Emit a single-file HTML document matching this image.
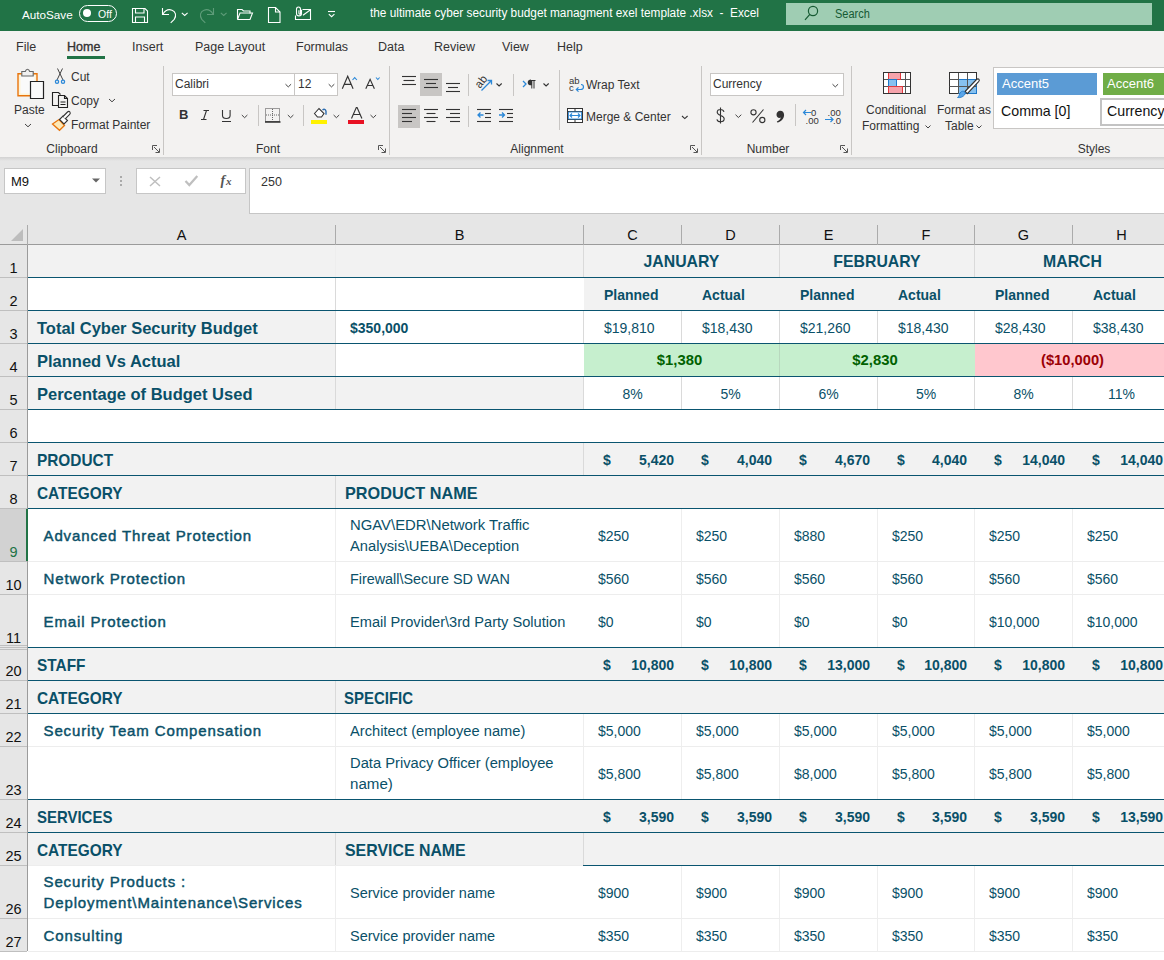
<!DOCTYPE html><html><head><meta charset="utf-8"><style>
html,body{margin:0;padding:0;}
body{width:1164px;height:960px;overflow:hidden;position:relative;background:#fff;font-family:"Liberation Sans",sans-serif;}
div{box-sizing:border-box;}
.rb{color:#333333;font-size:12.5px;line-height:15px;}
.c{color:#0B5675;}
</style></head><body>

<div style="position:absolute;left:0px;top:0px;width:1164px;height:31px;background:#217346"></div>
<div style="position:absolute;left:22px;top:7px;white-space:nowrap;color:#fff;font-size:11.7px;line-height:15px">AutoSave</div>
<div style="position:absolute;left:79px;top:5px;width:38px;height:17px;border:1.3px solid #fff;border-radius:9px"></div>
<div style="position:absolute;left:82.5px;top:8.5px;width:8.5px;height:8.5px;background:#fff;border-radius:50%"></div>
<div style="position:absolute;left:98px;top:7.5px;white-space:nowrap;color:#fff;font-size:10.5px;line-height:13px">Off</div>
<svg style="position:absolute;left:0;top:0" width="360" height="31" viewBox="0 0 360 31">
<g fill="none" stroke="#fff" stroke-width="1.1">
<path d="M132.5 8.5h12.5l2.5 2.5v11.5h-15z"/><path d="M135.5 8.5v4.5h8.5v-4.5"/><path d="M135.5 22.5v-5.5h9v5.5"/>
<path d="M162.5 8v6.5h6.5"/><path d="M163 14c2.2-3.5 5.8-5 9-3.8 3.6 1.4 4.8 5.6 2.2 9.2l-3.5 3.5"/>
<path d="M181.8 12.8l2.9 2.6 2.9-2.6"/>
</g>
<g fill="none" stroke="#5E9C79" stroke-width="1.1">
<path d="M213.5 8v6.5h-6.5"/><path d="M213 14c-2.2-3.5-5.8-5-9-3.8-3.6 1.4-4.8 5.6-2.2 9.2l3.5 3.5"/>
<path d="M220.8 12.8l2.9 2.6 2.9-2.6"/>
</g>
<g fill="none" stroke="#fff" stroke-width="1.1">
<path d="M237.5 19.5v-10h4.5l1.5 1.5h6.5v2.5"/><path d="M237.5 19.5h12.5l2.5-6.5h-12.5l-2.5 6.5"/>
<path d="M268.5 7.5h7l4.5 4.5v10.5h-11.5z"/><path d="M275.5 7.5v4.5h4.5"/>
<path d="M302.5 9.5h8v10h-15v-4"/><path d="M303 15.2l7.2-5.2"/>
<path d="M301.5 9.8v3.7c0 1.4-1.1 2.4-2.5 2.4s-2.5-1-2.5-2.4v-4.3c0-1.3 0.9-2.2 2-2.2s2 0.9 2 2.2v4c0 0.5-0.3 0.9-0.8 0.9s-0.8-0.4-0.8-0.9v-3"/>
<path d="M328 11.5h7"/><path d="M328.8 14.2l2.8 2.5 2.8-2.5"/>
</g>
</svg>
<div style="position:absolute;left:370px;top:6px;white-space:nowrap;color:#fff;font-size:12px;line-height:15px;transform:scaleX(0.985);transform-origin:0 0">the ultimate cyber security budget managment exel template .xlsx&nbsp; -&nbsp; Excel</div>
<div style="position:absolute;left:786px;top:3px;width:366px;height:22px;background:#9FCDB3"></div>
<svg style="position:absolute;left:800px;top:4px" width="22" height="20" viewBox="0 0 22 20"><g fill="none" stroke="#165A33" stroke-width="1.2"><circle cx="13" cy="7" r="4.6"/><path d="M9.8 10.3l-4.8 5.5"/></g></svg>
<div style="position:absolute;left:835px;top:7px;white-space:nowrap;color:#165A33;font-size:12.5px;line-height:15px;transform:scaleX(0.88);transform-origin:0 0">Search</div>
<div style="position:absolute;left:0px;top:31px;width:1164px;height:126px;background:#F3F2F1"></div>
<div style="position:absolute;left:0px;top:157px;width:1164px;height:4px;background:linear-gradient(#D2D2D2,#E6E6E6)"></div>
<div style="position:absolute;left:16px;top:40px;white-space:nowrap;color:#333333;font-size:12.5px;line-height:15px">File</div>
<div style="position:absolute;left:67px;top:40px;white-space:nowrap;color:#333333;font-size:12.5px;line-height:15px;-webkit-text-stroke:0.35px #333333">Home</div>
<div style="position:absolute;left:132px;top:40px;white-space:nowrap;color:#333333;font-size:12.5px;line-height:15px">Insert</div>
<div style="position:absolute;left:195px;top:40px;white-space:nowrap;color:#333333;font-size:12.5px;line-height:15px">Page Layout</div>
<div style="position:absolute;left:296px;top:40px;white-space:nowrap;color:#333333;font-size:12.5px;line-height:15px">Formulas</div>
<div style="position:absolute;left:378px;top:40px;white-space:nowrap;color:#333333;font-size:12.5px;line-height:15px">Data</div>
<div style="position:absolute;left:434px;top:40px;white-space:nowrap;color:#333333;font-size:12.5px;line-height:15px">Review</div>
<div style="position:absolute;left:502px;top:40px;white-space:nowrap;color:#333333;font-size:12.5px;line-height:15px">View</div>
<div style="position:absolute;left:557px;top:40px;white-space:nowrap;color:#333333;font-size:12.5px;line-height:15px">Help</div>
<div style="position:absolute;left:67px;top:56px;width:38px;height:3px;background:#217346"></div>
<div style="position:absolute;left:163px;top:66px;width:1px;height:89px;background:#C8C6C4"></div>
<div style="position:absolute;left:389px;top:66px;width:1px;height:89px;background:#C8C6C4"></div>
<div style="position:absolute;left:701px;top:66px;width:1px;height:89px;background:#C8C6C4"></div>
<div style="position:absolute;left:851px;top:66px;width:1px;height:89px;background:#C8C6C4"></div>
<div style="position:absolute;left:468px;top:74px;width:1px;height:22px;background:#C8C6C4"></div>
<div style="position:absolute;left:513px;top:74px;width:1px;height:22px;background:#C8C6C4"></div>
<div style="position:absolute;left:559px;top:70px;width:1px;height:60px;background:#C8C6C4"></div>
<div style="position:absolute;left:468px;top:106px;width:1px;height:21px;background:#C8C6C4"></div>
<div style="position:absolute;left:258px;top:105px;width:1px;height:21px;background:#C8C6C4"></div>
<div style="position:absolute;left:303px;top:105px;width:1px;height:21px;background:#C8C6C4"></div>
<div style="position:absolute;left:795px;top:104px;width:1px;height:22px;background:#C8C6C4"></div>
<div class="rb" style="position:absolute;left:12px;top:142px;width:120px;text-align:center;font-size:12px">Clipboard</div>
<div class="rb" style="position:absolute;left:208px;top:142px;width:120px;text-align:center;font-size:12px">Font</div>
<div class="rb" style="position:absolute;left:477px;top:142px;width:120px;text-align:center;font-size:12px">Alignment</div>
<div class="rb" style="position:absolute;left:708px;top:142px;width:120px;text-align:center;font-size:12px">Number</div>
<div class="rb" style="position:absolute;left:1034px;top:142px;width:120px;text-align:center;font-size:12px">Styles</div>
<svg style="position:absolute;left:151px;top:144px" width="10" height="10" viewBox="0 0 10 10"><g fill="none" stroke="#555" stroke-width="1"><path d="M1.5 6V1.5H6"/><path d="M3 3l5 5M8.5 4.5v4h-4"/></g></svg>
<svg style="position:absolute;left:377px;top:144px" width="10" height="10" viewBox="0 0 10 10"><g fill="none" stroke="#555" stroke-width="1"><path d="M1.5 6V1.5H6"/><path d="M3 3l5 5M8.5 4.5v4h-4"/></g></svg>
<svg style="position:absolute;left:689px;top:144px" width="10" height="10" viewBox="0 0 10 10"><g fill="none" stroke="#555" stroke-width="1"><path d="M1.5 6V1.5H6"/><path d="M3 3l5 5M8.5 4.5v4h-4"/></g></svg>
<svg style="position:absolute;left:839px;top:144px" width="10" height="10" viewBox="0 0 10 10"><g fill="none" stroke="#555" stroke-width="1"><path d="M1.5 6V1.5H6"/><path d="M3 3l5 5M8.5 4.5v4h-4"/></g></svg>
<svg style="position:absolute;left:0;top:60px" width="165" height="80" viewBox="0 60 165 80">
<path d="M18 73.8h19v22h-19z" fill="#FDF3D8" stroke="#E8740C" stroke-width="1.4"/>
<path d="M20.5 75.5h14v18h-14z" fill="#FAFAFA"/>
<path d="M21.8 76v-4.5h3.5c0.5-1.5 1.5-2.3 2.2-2.3s1.7 0.8 2.2 2.3h3.5v4.5z" fill="#F0F0F0" stroke="#666" stroke-width="1.1"/>
<path d="M30.5 81.5h13v17h-13z" fill="#FAFAFA" stroke="#222" stroke-width="1.2"/>
<g fill="none" stroke="#444" stroke-width="1"><path d="M57.5 68.5l5.5 11.5M62.5 68.5l-5.5 11.5"/></g>
<g fill="none" stroke="#2B88D8" stroke-width="1.3"><circle cx="57" cy="81.8" r="1.6"/><circle cx="63" cy="81.8" r="1.6"/></g>
<g fill="none" stroke="#222" stroke-width="1.1"><path d="M59 105.5h-6.5v-13h6l2 2"/><path d="M58.5 107.5v-12h6l3 3v9z"/><path d="M64.5 95.5v3h3"/><path d="M60.5 102h5M60.5 104.5h5"/></g>
<path d="M52.5 124l6.5-4.5 5.5 6-5 4.8z" fill="#FDE9B8" stroke="#E8740C" stroke-width="1.3"/>
<path d="M59.5 119.5l3.5-3.5 4.5 4.5-3.5 3.5z" fill="#fff" stroke="#333" stroke-width="1.1"/>
<path d="M63 116.5l4.5-4.5c0.8-0.8 1.8-0.8 2.4 0s0.5 1.6-0.2 2.3l-4.5 4.5" fill="#fff" stroke="#333" stroke-width="1.1"/>
<path d="M25 124l3 2.8 3-2.8" fill="none" stroke="#444" stroke-width="1"/>
<path d="M109 99l3 2.8 3-2.8" fill="none" stroke="#444" stroke-width="1"/>
</svg>
<div style="position:absolute;left:14px;top:102.5px;white-space:nowrap;color:#333333;font-size:12px;line-height:15px">Paste</div>
<div style="position:absolute;left:71px;top:69.5px;white-space:nowrap;color:#333333;font-size:12px;line-height:15px">Cut</div>
<div style="position:absolute;left:71px;top:93.5px;white-space:nowrap;color:#333333;font-size:12px;line-height:15px">Copy</div>
<div style="position:absolute;left:71px;top:117.5px;white-space:nowrap;color:#333333;font-size:12px;line-height:15px">Format Painter</div>
<div style="position:absolute;left:172px;top:73px;width:123px;height:23px;background:#fff;border:1px solid #C8C6C4"></div>
<div style="position:absolute;left:294px;top:73px;width:44px;height:23px;background:#fff;border:1px solid #C8C6C4"></div>
<div style="position:absolute;left:175px;top:77px;white-space:nowrap;color:#333333;font-size:12px;line-height:15px">Calibri</div>
<div style="position:absolute;left:298px;top:77px;white-space:nowrap;color:#333333;font-size:12px;line-height:15px">12</div>
<svg style="position:absolute;left:160px;top:60px" width="230" height="75" viewBox="160 60 230 75">
<g fill="none" stroke="#444" stroke-width="1">
<path d="M285.5 84.2l2.8 2.7 2.8-2.7"/><path d="M328.7 84.2l2.8 2.7 2.8-2.7"/>
<path d="M241.8 115l2.8 2.7 2.8-2.7"/><path d="M287.8 115l2.8 2.7 2.8-2.7"/>
<path d="M333.6 115l2.8 2.7 2.8-2.7"/><path d="M370.5 115l2.8 2.7 2.8-2.7"/>
</g>
<path d="M352.5 80l2.2-2.4 2.2 2.4M376 77.5l1.8 2 1.8-2" fill="none" stroke="#2B88D8" stroke-width="1.1"/>
<g fill="none" stroke="#333" stroke-width="1.15">
<path d="M342.3 88.8l5.4-12.5 5.4 12.5M344.2 84.3h7"/>
<path d="M365.8 88.8l4.3-9.5 4.3 9.5M367.3 85.5h5.6"/>
</g>
<path d="M265.5 108.5h14v13h-14z" fill="none" stroke="#444" stroke-width="1" stroke-dasharray="1 1"/>
<path d="M265 122h15.5" stroke="#111" stroke-width="1.3"/>
<path d="M272.5 109v12M266 115h13" stroke="#666" stroke-width="1" stroke-dasharray="1 1"/>
<rect x="311" y="120" width="16" height="4" fill="#FFF200"/>
<path d="M314.5 113.5l4.5-5 5 5-2.5 3.5h-4z" fill="#fff" stroke="#333" stroke-width="1.1"/>
<path d="M322.5 110c1.5-1.2 3-0.8 3.5 1.2v3.5" fill="none" stroke="#2B6CB0" stroke-width="1.4"/>
<rect x="348" y="120" width="16" height="4" fill="#E81123"/>
<path d="M351.5 118.5l4.8-11h0.8l4.8 11M353.3 114.5h7" fill="none" stroke="#333" stroke-width="1.15"/>
<path d="M222.5 110v5.5c0 2 1.5 3 3.8 3s3.8-1 3.8-3v-5.5" fill="none" stroke="#333" stroke-width="1.1"/>
<path d="M222 121.5h9" stroke="#333" stroke-width="1"/>
<path d="M203.5 110.5h5.5M201 119.5h5.5M206.5 110.5l-3 9" fill="none" stroke="#333" stroke-width="1.1"/>
</svg>
<div style="position:absolute;left:179px;top:106px;white-space:nowrap;color:#333;font-size:13px;line-height:17px"><b>B</b></div>
<div style="position:absolute;left:420px;top:73px;width:22px;height:23px;background:#C8C6C4"></div>
<div style="position:absolute;left:398px;top:105px;width:22px;height:23px;background:#C8C6C4"></div>
<svg style="position:absolute;left:0;top:0" width="720" height="140" viewBox="0 0 720 140"><g fill="none" stroke="#333" stroke-width="1.1"><path d="M402 76.5h14"/><path d="M403.5 80.5h11.0"/><path d="M402 84.5h14"/><path d="M424 79.5h14"/><path d="M426 83.5h10"/><path d="M424 87.5h14"/><path d="M446 83.5h14"/><path d="M448 87.5h10"/><path d="M446 91.5h14"/><path d="M402 109.5h14"/><path d="M424 109.5h14"/><path d="M446 109.5h14"/><path d="M402 113.5h10"/><path d="M426.5 113.5h9.0"/><path d="M450 113.5h10"/><path d="M402 117.5h14"/><path d="M424 117.5h14"/><path d="M446 117.5h14"/><path d="M402 121.5h10"/><path d="M426.5 121.5h9.0"/><path d="M450 121.5h10"/><path d="M477 109.5h14"/><path d="M485 113.5h6"/><path d="M485 117.5h6"/><path d="M477 121.5h14"/><path d="M499 109.5h14"/><path d="M507 113.5h6"/><path d="M507 117.5h6"/><path d="M499 121.5h14"/><path d="M496.5 83.5l2.6 2.5 2.6-2.5"/><path d="M543.5 83.5l2.6 2.5 2.6-2.5"/><path d="M682 116l2.8 2.6 2.8-2.6"/></g><g fill="none" stroke="#2B88D8" stroke-width="1.3"><path d="M478 115h5.5M480.5 112.5l-2.5 2.5 2.5 2.5"/><path d="M499 115h5.5M502 112.5l2.5 2.5-2.5 2.5"/><path d="M481.5 90.5l10-10M487.5 80.5h4v4"/><path d="M523 81l3 3-3 3"/></g><text x="0" y="0" font-size="11.5" fill="#333" font-family="Liberation Sans" transform="translate(480 89) rotate(-52)">ab</text><path d="M531 80h4.5v1h-1v7.5h-1v-7.5h-1.2v7.5h-1v-3.2c-2.2 0-3.6-1-3.6-2.9s1.4-2.9 3.3-2.9z" fill="#333"/><text x="569" y="84" font-size="9.5" fill="#333" font-family="Liberation Sans">ab</text><text x="569" y="91" font-size="9.5" fill="#333" font-family="Liberation Sans">c</text><path d="M576.5 89.5h4c2.2 0 3-1 3-2.5s-0.8-2.5-2.5-2.5M578.5 87.3l-2.2 2.2 2.2 2.2" fill="none" stroke="#2B88D8" stroke-width="1.2"/><rect x="567.5" y="108.5" width="15" height="14" fill="#fff" stroke="#333" stroke-width="1"/><path d="M567.5 111.5h15M567.5 119.5h15M575 108.5v3M575 119.5v3" stroke="#333" stroke-width="1" fill="none"/><path d="M568.5 112h13v7h-13z" fill="#fff" stroke="#2B88D8" stroke-width="0.9"/><path d="M570 115.5h10M572 113.5l-2 2 2 2M578 113.5l2 2-2 2" fill="none" stroke="#2B88D8" stroke-width="1.2"/></svg>
<div style="position:absolute;left:586px;top:77.5px;white-space:nowrap;color:#333333;font-size:12px;line-height:15px">Wrap Text</div>
<div style="position:absolute;left:586px;top:109.5px;white-space:nowrap;color:#333333;font-size:12px;line-height:15px">Merge &amp; Center</div>
<div style="position:absolute;left:710px;top:73px;width:134px;height:23px;background:#fff;border:1px solid #C8C6C4"></div>
<div style="position:absolute;left:713px;top:77px;white-space:nowrap;color:#333333;font-size:12px;line-height:15px">Currency</div>
<svg style="position:absolute;left:0;top:0" width="860" height="140" viewBox="0 0 860 140"><g fill="none" stroke="#444" stroke-width="1"><path d="M832.5 84.2l2.8 2.7 2.8-2.7"/><path d="M735.5 114.7l2.9 2.8 2.9-2.8"/></g><g fill="none" stroke="#333" stroke-width="1.1"><path d="M724 111.8c-0.5-1.5-1.8-2.3-3.5-2.3-2 0-3.3 1.1-3.3 2.8 0 3.8 7 2.7 7 6.5 0 1.8-1.5 3-3.6 3-1.9 0-3.3-0.9-3.7-2.5M720.5 107.5v16"/><circle cx="753.5" cy="112.3" r="2.6"/><circle cx="762.3" cy="120" r="2.6"/><path d="M763.5 109.5l-11 13"/></g><path d="M780.2 110.8c2.3 0 3.9 1.6 3.9 4.1 0 3.5-2.8 6.6-6.8 7.6l-0.5-1c2.2-0.9 3.6-2.3 4-3.9-0.4 0.2-0.8 0.3-1.3 0.3-1.7 0-3-1.2-3-3.2 0-2.2 1.6-3.9 3.7-3.9z" fill="#333"/><text x="811" y="116" font-size="9.5" fill="#333" font-family="Liberation Sans">0</text><text x="805.5" y="123.5" font-size="9.5" fill="#333" font-family="Liberation Sans">.00</text><text x="827.5" y="116" font-size="9.5" fill="#333" font-family="Liberation Sans">.00</text><text x="833" y="123.5" font-size="9.5" fill="#333" font-family="Liberation Sans">.0</text><path d="M803.5 112.5h8M806 110l-2.5 2.5 2.5 2.5M825 119.5h8M830.5 117l2.5 2.5-2.5 2.5" fill="none" stroke="#2B88D8" stroke-width="1.2"/></svg>
<svg style="position:absolute;left:0;top:0" width="1000" height="140" viewBox="0 0 1000 140"><rect x="883.5" y="72.5" width="27" height="21" fill="#fff" stroke="#333"/><path d="M883.5 79.5h27M883.5 86.5h27M905.5 72.5v21" stroke="#555" stroke-width="1" fill="none"/><rect x="888.5" y="72.5" width="12" height="7" fill="#F5A3AB" stroke="#E03A3E"/><rect x="888.5" y="79.5" width="8" height="7" fill="#86C1F0" stroke="#1F78C8"/><rect x="888.5" y="86.5" width="14" height="7" fill="#F5A3AB" stroke="#E03A3E"/><path d="M883.5 72.5h27v21h-27z" stroke="#333" stroke-width="1" fill="none"/><rect x="949.5" y="72.5" width="27" height="21" fill="#fff" stroke="#333"/><rect x="958.5" y="79.5" width="18" height="14" fill="#86C1F0" stroke="#1F78C8"/><path d="M949.5 79.5h9M949.5 86.5h27M958.5 72.5v21M967.5 72.5v21" stroke="#555" stroke-width="1" fill="none"/><path d="M949.5 72.5h27v7" stroke="#333" stroke-width="1" fill="none"/><path d="M965 91.5l11.5-12c0.8-0.8 2-0.8 2.5-0.2s0.3 1.6-0.4 2.4l-11.3 12z" fill="#fff" stroke="#333" stroke-width="1.1"/><path d="M957.5 97.5c2.5 0.5 5.5-0.5 7-2.5 1.2-1.5 0.8-3-0.6-3.6-1.5-0.6-3 0.2-3.8 1.6-0.8 1.5-1.2 3.5-2.6 4.5z" fill="#5AA5E8" stroke="#1F78C8" stroke-width="0.8"/><g fill="none" stroke="#444" stroke-width="1"><path d="M925.5 125.5l2.5 2.5 2.5-2.5"/><path d="M976.5 125.5l2.5 2.5 2.5-2.5"/></g></svg>
<div style="position:absolute;left:866px;top:103px;white-space:nowrap;color:#333333;font-size:12px;line-height:15px">Conditional</div>
<div style="position:absolute;left:862px;top:119px;white-space:nowrap;color:#333333;font-size:12px;line-height:15px">Formatting</div>
<div style="position:absolute;left:937px;top:103px;white-space:nowrap;color:#333333;font-size:12px;line-height:15px">Format as</div>
<div style="position:absolute;left:945px;top:119px;white-space:nowrap;color:#333333;font-size:12px;line-height:15px">Table</div>
<div style="position:absolute;left:993px;top:67px;width:180px;height:62px;background:#fff;border:1px solid #C8C6C4"></div>
<div style="position:absolute;left:997px;top:73px;width:100px;height:22px;background:#5B9BD5"></div>
<div style="position:absolute;left:1103px;top:73px;width:70px;height:22px;background:#70AD47"></div>
<div style="position:absolute;left:1002px;top:76px;white-space:nowrap;color:#fff;font-size:13px;line-height:15px">Accent5</div>
<div style="position:absolute;left:1107px;top:76px;white-space:nowrap;color:#fff;font-size:13px;line-height:15px">Accent6</div>
<div style="position:absolute;left:1001px;top:104px;white-space:nowrap;color:#111;font-size:14.2px;line-height:15px">Comma [0]</div>
<div style="position:absolute;left:1100px;top:98px;width:80px;height:28px;border:2.5px solid #C3C3C3;background:#fff"></div>
<div style="position:absolute;left:1107px;top:104px;white-space:nowrap;color:#111;font-size:14.2px;line-height:15px">Currency</div>
<div style="position:absolute;left:0px;top:161px;width:1164px;height:64px;background:#E6E6E6"></div>
<div style="position:absolute;left:4px;top:168px;width:102px;height:26px;background:#fff;border:1px solid #C6C6C6"></div>
<div style="position:absolute;left:11px;top:174px;white-space:nowrap;color:#111;font-size:13px;line-height:15px">M9</div>
<svg style="position:absolute;left:91px;top:177px" width="10" height="8"><path d="M1 1.5h8l-4 4z" fill="#666"/></svg>
<div style="position:absolute;left:120px;top:176px;width:2px;height:2px;background:#AAAAAA"></div>
<div style="position:absolute;left:120px;top:180px;width:2px;height:2px;background:#AAAAAA"></div>
<div style="position:absolute;left:120px;top:184px;width:2px;height:2px;background:#AAAAAA"></div>
<div style="position:absolute;left:136px;top:168px;width:110px;height:26px;background:#fff;border:1px solid #C6C6C6"></div>
<svg style="position:absolute;left:136px;top:168px" width="110" height="26" viewBox="136 168 110 26"><g fill="none" stroke="#BFBFBF"><path d="M150 177l10 9M160 177l-10 9" stroke-width="1.5"/><path d="M185.5 181l3.8 4 8-9" stroke-width="2.2"/></g>
<text x="220.5" y="185" font-size="14" font-weight="bold" font-style="italic" font-family="Liberation Serif" fill="#555">f</text><text x="226" y="185" font-size="11" font-weight="bold" font-style="italic" font-family="Liberation Serif" fill="#555">x</text></svg>
<div style="position:absolute;left:249px;top:168px;width:920px;height:46px;background:#fff;border:1px solid #C6C6C6;border-right:none"></div>
<div style="position:absolute;left:261px;top:175px;white-space:nowrap;color:#333;font-size:12.5px;line-height:15px">250</div>
<!--GRID-->
<div style="position:absolute;left:0px;top:225px;width:1164px;height:735px;background:#fff"></div>
<div style="position:absolute;left:0px;top:225px;width:1164px;height:20px;background:#E6E6E6"></div>
<div style="position:absolute;left:0px;top:244px;width:1164px;height:1px;background:#9B9B9B"></div>
<svg style="position:absolute;left:10px;top:228px" width="14" height="14"><path d="M13 1v12H1z" fill="#BDBDBD"/></svg>
<div style="position:absolute;left:335px;top:225px;width:1px;height:20px;background:#ABABAB"></div>
<div style="position:absolute;left:583px;top:225px;width:1px;height:20px;background:#ABABAB"></div>
<div style="position:absolute;left:681px;top:225px;width:1px;height:20px;background:#ABABAB"></div>
<div style="position:absolute;left:779px;top:225px;width:1px;height:20px;background:#ABABAB"></div>
<div style="position:absolute;left:877px;top:225px;width:1px;height:20px;background:#ABABAB"></div>
<div style="position:absolute;left:974px;top:225px;width:1px;height:20px;background:#ABABAB"></div>
<div style="position:absolute;left:1072px;top:225px;width:1px;height:20px;background:#ABABAB"></div>
<div style="position:absolute;left:1170px;top:225px;width:1px;height:20px;background:#ABABAB"></div>
<div style="position:absolute;left:27px;top:225px;width:1px;height:20px;background:#ABABAB"></div>
<div style="position:absolute;left:28px;top:227px;width:307px;text-align:center;font-size:14.5px;line-height:16px;color:#111">A</div>
<div style="position:absolute;left:336px;top:227px;width:247px;text-align:center;font-size:14.5px;line-height:16px;color:#111">B</div>
<div style="position:absolute;left:584px;top:227px;width:97px;text-align:center;font-size:14.5px;line-height:16px;color:#111">C</div>
<div style="position:absolute;left:682px;top:227px;width:97px;text-align:center;font-size:14.5px;line-height:16px;color:#111">D</div>
<div style="position:absolute;left:780px;top:227px;width:97px;text-align:center;font-size:14.5px;line-height:16px;color:#111">E</div>
<div style="position:absolute;left:878px;top:227px;width:96px;text-align:center;font-size:14.5px;line-height:16px;color:#111">F</div>
<div style="position:absolute;left:975px;top:227px;width:97px;text-align:center;font-size:14.5px;line-height:16px;color:#111">G</div>
<div style="position:absolute;left:1073px;top:227px;width:97px;text-align:center;font-size:14.5px;line-height:16px;color:#111">H</div>
<div style="position:absolute;left:0px;top:245px;width:27px;height:707px;background:#E6E6E6"></div>
<div style="position:absolute;left:27px;top:245px;width:1px;height:706px;background:#9B9B9B"></div>
<div style="position:absolute;left:0px;top:277px;width:27px;height:1px;background:#BFBFBF"></div>
<div style="position:absolute;left:0px;top:310px;width:27px;height:1px;background:#BFBFBF"></div>
<div style="position:absolute;left:0px;top:343px;width:27px;height:1px;background:#BFBFBF"></div>
<div style="position:absolute;left:0px;top:376px;width:27px;height:1px;background:#BFBFBF"></div>
<div style="position:absolute;left:0px;top:409px;width:27px;height:1px;background:#BFBFBF"></div>
<div style="position:absolute;left:0px;top:442px;width:27px;height:1px;background:#BFBFBF"></div>
<div style="position:absolute;left:0px;top:475px;width:27px;height:1px;background:#BFBFBF"></div>
<div style="position:absolute;left:0px;top:508px;width:27px;height:1px;background:#BFBFBF"></div>
<div style="position:absolute;left:0px;top:561px;width:27px;height:1px;background:#BFBFBF"></div>
<div style="position:absolute;left:0px;top:594px;width:27px;height:1px;background:#BFBFBF"></div>
<div style="position:absolute;left:0px;top:647px;width:27px;height:1px;background:#BFBFBF"></div>
<div style="position:absolute;left:0px;top:680px;width:27px;height:1px;background:#BFBFBF"></div>
<div style="position:absolute;left:0px;top:713px;width:27px;height:1px;background:#BFBFBF"></div>
<div style="position:absolute;left:0px;top:746px;width:27px;height:1px;background:#BFBFBF"></div>
<div style="position:absolute;left:0px;top:799px;width:27px;height:1px;background:#BFBFBF"></div>
<div style="position:absolute;left:0px;top:832px;width:27px;height:1px;background:#BFBFBF"></div>
<div style="position:absolute;left:0px;top:865px;width:27px;height:1px;background:#BFBFBF"></div>
<div style="position:absolute;left:0px;top:918px;width:27px;height:1px;background:#BFBFBF"></div>
<div style="position:absolute;left:0px;top:951px;width:27px;height:1px;background:#BFBFBF"></div>
<div style="position:absolute;left:0px;top:645px;width:27px;height:1px;background:#BFBFBF"></div>
<div style="position:absolute;left:0px;top:649px;width:27px;height:1px;background:#BFBFBF"></div>
<div style="position:absolute;left:0px;top:509px;width:27px;height:52px;background:#D2D2D2"></div>
<div style="position:absolute;left:26px;top:509px;width:2px;height:52px;background:#217346"></div>
<div style="position:absolute;left:0;top:261px;width:27px;text-align:center;font-size:14.5px;line-height:14px;color:#111">1</div>
<div style="position:absolute;left:0;top:294px;width:27px;text-align:center;font-size:14.5px;line-height:14px;color:#111">2</div>
<div style="position:absolute;left:0;top:327px;width:27px;text-align:center;font-size:14.5px;line-height:14px;color:#111">3</div>
<div style="position:absolute;left:0;top:360px;width:27px;text-align:center;font-size:14.5px;line-height:14px;color:#111">4</div>
<div style="position:absolute;left:0;top:393px;width:27px;text-align:center;font-size:14.5px;line-height:14px;color:#111">5</div>
<div style="position:absolute;left:0;top:426px;width:27px;text-align:center;font-size:14.5px;line-height:14px;color:#111">6</div>
<div style="position:absolute;left:0;top:459px;width:27px;text-align:center;font-size:14.5px;line-height:14px;color:#111">7</div>
<div style="position:absolute;left:0;top:492px;width:27px;text-align:center;font-size:14.5px;line-height:14px;color:#111">8</div>
<div style="position:absolute;left:0;top:545px;width:27px;text-align:center;font-size:14.5px;line-height:14px;color:#217346">9</div>
<div style="position:absolute;left:0;top:578px;width:27px;text-align:center;font-size:14.5px;line-height:14px;color:#111">10</div>
<div style="position:absolute;left:0;top:631px;width:27px;text-align:center;font-size:14.5px;line-height:14px;color:#111">11</div>
<div style="position:absolute;left:0;top:664px;width:27px;text-align:center;font-size:14.5px;line-height:14px;color:#111">20</div>
<div style="position:absolute;left:0;top:697px;width:27px;text-align:center;font-size:14.5px;line-height:14px;color:#111">21</div>
<div style="position:absolute;left:0;top:730px;width:27px;text-align:center;font-size:14.5px;line-height:14px;color:#111">22</div>
<div style="position:absolute;left:0;top:783px;width:27px;text-align:center;font-size:14.5px;line-height:14px;color:#111">23</div>
<div style="position:absolute;left:0;top:816px;width:27px;text-align:center;font-size:14.5px;line-height:14px;color:#111">24</div>
<div style="position:absolute;left:0;top:849px;width:27px;text-align:center;font-size:14.5px;line-height:14px;color:#111">25</div>
<div style="position:absolute;left:0;top:902px;width:27px;text-align:center;font-size:14.5px;line-height:14px;color:#111">26</div>
<div style="position:absolute;left:0;top:935px;width:27px;text-align:center;font-size:14.5px;line-height:14px;color:#111">27</div>
<div style="position:absolute;left:28px;top:245px;width:308px;height:32px;background:#F2F2F2"></div>
<div style="position:absolute;left:336px;top:245px;width:248px;height:32px;background:#F2F2F2"></div>
<div style="position:absolute;left:584px;top:245px;width:98px;height:32px;background:#F2F2F2"></div>
<div style="position:absolute;left:682px;top:245px;width:98px;height:32px;background:#F2F2F2"></div>
<div style="position:absolute;left:780px;top:245px;width:98px;height:32px;background:#F2F2F2"></div>
<div style="position:absolute;left:878px;top:245px;width:97px;height:32px;background:#F2F2F2"></div>
<div style="position:absolute;left:975px;top:245px;width:98px;height:32px;background:#F2F2F2"></div>
<div style="position:absolute;left:1073px;top:245px;width:98px;height:32px;background:#F2F2F2"></div>
<div style="position:absolute;left:28px;top:278px;width:308px;height:32px;background:#FFFFFF"></div>
<div style="position:absolute;left:336px;top:278px;width:248px;height:32px;background:#FFFFFF"></div>
<div style="position:absolute;left:584px;top:278px;width:98px;height:32px;background:#F2F2F2"></div>
<div style="position:absolute;left:682px;top:278px;width:98px;height:32px;background:#F2F2F2"></div>
<div style="position:absolute;left:780px;top:278px;width:98px;height:32px;background:#F2F2F2"></div>
<div style="position:absolute;left:878px;top:278px;width:97px;height:32px;background:#F2F2F2"></div>
<div style="position:absolute;left:975px;top:278px;width:98px;height:32px;background:#F2F2F2"></div>
<div style="position:absolute;left:1073px;top:278px;width:98px;height:32px;background:#F2F2F2"></div>
<div style="position:absolute;left:28px;top:311px;width:308px;height:32px;background:#F2F2F2"></div>
<div style="position:absolute;left:336px;top:311px;width:248px;height:32px;background:#FFFFFF"></div>
<div style="position:absolute;left:584px;top:311px;width:98px;height:32px;background:#FFFFFF"></div>
<div style="position:absolute;left:682px;top:311px;width:98px;height:32px;background:#FFFFFF"></div>
<div style="position:absolute;left:780px;top:311px;width:98px;height:32px;background:#FFFFFF"></div>
<div style="position:absolute;left:878px;top:311px;width:97px;height:32px;background:#FFFFFF"></div>
<div style="position:absolute;left:975px;top:311px;width:98px;height:32px;background:#FFFFFF"></div>
<div style="position:absolute;left:1073px;top:311px;width:98px;height:32px;background:#FFFFFF"></div>
<div style="position:absolute;left:28px;top:344px;width:308px;height:32px;background:#F2F2F2"></div>
<div style="position:absolute;left:336px;top:344px;width:248px;height:32px;background:#FFFFFF"></div>
<div style="position:absolute;left:584px;top:344px;width:98px;height:32px;background:#C6EFCE"></div>
<div style="position:absolute;left:682px;top:344px;width:98px;height:32px;background:#C6EFCE"></div>
<div style="position:absolute;left:780px;top:344px;width:98px;height:32px;background:#C6EFCE"></div>
<div style="position:absolute;left:878px;top:344px;width:97px;height:32px;background:#C6EFCE"></div>
<div style="position:absolute;left:975px;top:344px;width:98px;height:32px;background:#FFC7CE"></div>
<div style="position:absolute;left:1073px;top:344px;width:98px;height:32px;background:#FFC7CE"></div>
<div style="position:absolute;left:28px;top:377px;width:308px;height:32px;background:#F2F2F2"></div>
<div style="position:absolute;left:336px;top:377px;width:248px;height:32px;background:#F2F2F2"></div>
<div style="position:absolute;left:584px;top:377px;width:98px;height:32px;background:#FFFFFF"></div>
<div style="position:absolute;left:682px;top:377px;width:98px;height:32px;background:#FFFFFF"></div>
<div style="position:absolute;left:780px;top:377px;width:98px;height:32px;background:#FFFFFF"></div>
<div style="position:absolute;left:878px;top:377px;width:97px;height:32px;background:#FFFFFF"></div>
<div style="position:absolute;left:975px;top:377px;width:98px;height:32px;background:#FFFFFF"></div>
<div style="position:absolute;left:1073px;top:377px;width:98px;height:32px;background:#FFFFFF"></div>
<div style="position:absolute;left:28px;top:410px;width:308px;height:32px;background:#FFFFFF"></div>
<div style="position:absolute;left:336px;top:410px;width:248px;height:32px;background:#FFFFFF"></div>
<div style="position:absolute;left:584px;top:410px;width:98px;height:32px;background:#FFFFFF"></div>
<div style="position:absolute;left:682px;top:410px;width:98px;height:32px;background:#FFFFFF"></div>
<div style="position:absolute;left:780px;top:410px;width:98px;height:32px;background:#FFFFFF"></div>
<div style="position:absolute;left:878px;top:410px;width:97px;height:32px;background:#FFFFFF"></div>
<div style="position:absolute;left:975px;top:410px;width:98px;height:32px;background:#FFFFFF"></div>
<div style="position:absolute;left:1073px;top:410px;width:98px;height:32px;background:#FFFFFF"></div>
<div style="position:absolute;left:28px;top:443px;width:308px;height:32px;background:#F2F2F2"></div>
<div style="position:absolute;left:336px;top:443px;width:248px;height:32px;background:#F2F2F2"></div>
<div style="position:absolute;left:584px;top:443px;width:98px;height:32px;background:#F2F2F2"></div>
<div style="position:absolute;left:682px;top:443px;width:98px;height:32px;background:#F2F2F2"></div>
<div style="position:absolute;left:780px;top:443px;width:98px;height:32px;background:#F2F2F2"></div>
<div style="position:absolute;left:878px;top:443px;width:97px;height:32px;background:#F2F2F2"></div>
<div style="position:absolute;left:975px;top:443px;width:98px;height:32px;background:#F2F2F2"></div>
<div style="position:absolute;left:1073px;top:443px;width:98px;height:32px;background:#F2F2F2"></div>
<div style="position:absolute;left:28px;top:476px;width:308px;height:32px;background:#F2F2F2"></div>
<div style="position:absolute;left:336px;top:476px;width:248px;height:32px;background:#F2F2F2"></div>
<div style="position:absolute;left:584px;top:476px;width:98px;height:32px;background:#F2F2F2"></div>
<div style="position:absolute;left:682px;top:476px;width:98px;height:32px;background:#F2F2F2"></div>
<div style="position:absolute;left:780px;top:476px;width:98px;height:32px;background:#F2F2F2"></div>
<div style="position:absolute;left:878px;top:476px;width:97px;height:32px;background:#F2F2F2"></div>
<div style="position:absolute;left:975px;top:476px;width:98px;height:32px;background:#F2F2F2"></div>
<div style="position:absolute;left:1073px;top:476px;width:98px;height:32px;background:#F2F2F2"></div>
<div style="position:absolute;left:28px;top:509px;width:308px;height:52px;background:#FFFFFF"></div>
<div style="position:absolute;left:336px;top:509px;width:248px;height:52px;background:#FFFFFF"></div>
<div style="position:absolute;left:584px;top:509px;width:98px;height:52px;background:#FFFFFF"></div>
<div style="position:absolute;left:682px;top:509px;width:98px;height:52px;background:#FFFFFF"></div>
<div style="position:absolute;left:780px;top:509px;width:98px;height:52px;background:#FFFFFF"></div>
<div style="position:absolute;left:878px;top:509px;width:97px;height:52px;background:#FFFFFF"></div>
<div style="position:absolute;left:975px;top:509px;width:98px;height:52px;background:#FFFFFF"></div>
<div style="position:absolute;left:1073px;top:509px;width:98px;height:52px;background:#FFFFFF"></div>
<div style="position:absolute;left:28px;top:562px;width:308px;height:32px;background:#FFFFFF"></div>
<div style="position:absolute;left:336px;top:562px;width:248px;height:32px;background:#FFFFFF"></div>
<div style="position:absolute;left:584px;top:562px;width:98px;height:32px;background:#FFFFFF"></div>
<div style="position:absolute;left:682px;top:562px;width:98px;height:32px;background:#FFFFFF"></div>
<div style="position:absolute;left:780px;top:562px;width:98px;height:32px;background:#FFFFFF"></div>
<div style="position:absolute;left:878px;top:562px;width:97px;height:32px;background:#FFFFFF"></div>
<div style="position:absolute;left:975px;top:562px;width:98px;height:32px;background:#FFFFFF"></div>
<div style="position:absolute;left:1073px;top:562px;width:98px;height:32px;background:#FFFFFF"></div>
<div style="position:absolute;left:28px;top:595px;width:308px;height:52px;background:#FFFFFF"></div>
<div style="position:absolute;left:336px;top:595px;width:248px;height:52px;background:#FFFFFF"></div>
<div style="position:absolute;left:584px;top:595px;width:98px;height:52px;background:#FFFFFF"></div>
<div style="position:absolute;left:682px;top:595px;width:98px;height:52px;background:#FFFFFF"></div>
<div style="position:absolute;left:780px;top:595px;width:98px;height:52px;background:#FFFFFF"></div>
<div style="position:absolute;left:878px;top:595px;width:97px;height:52px;background:#FFFFFF"></div>
<div style="position:absolute;left:975px;top:595px;width:98px;height:52px;background:#FFFFFF"></div>
<div style="position:absolute;left:1073px;top:595px;width:98px;height:52px;background:#FFFFFF"></div>
<div style="position:absolute;left:28px;top:648px;width:308px;height:32px;background:#F2F2F2"></div>
<div style="position:absolute;left:336px;top:648px;width:248px;height:32px;background:#F2F2F2"></div>
<div style="position:absolute;left:584px;top:648px;width:98px;height:32px;background:#F2F2F2"></div>
<div style="position:absolute;left:682px;top:648px;width:98px;height:32px;background:#F2F2F2"></div>
<div style="position:absolute;left:780px;top:648px;width:98px;height:32px;background:#F2F2F2"></div>
<div style="position:absolute;left:878px;top:648px;width:97px;height:32px;background:#F2F2F2"></div>
<div style="position:absolute;left:975px;top:648px;width:98px;height:32px;background:#F2F2F2"></div>
<div style="position:absolute;left:1073px;top:648px;width:98px;height:32px;background:#F2F2F2"></div>
<div style="position:absolute;left:28px;top:681px;width:308px;height:32px;background:#F2F2F2"></div>
<div style="position:absolute;left:336px;top:681px;width:248px;height:32px;background:#F2F2F2"></div>
<div style="position:absolute;left:584px;top:681px;width:98px;height:32px;background:#F2F2F2"></div>
<div style="position:absolute;left:682px;top:681px;width:98px;height:32px;background:#F2F2F2"></div>
<div style="position:absolute;left:780px;top:681px;width:98px;height:32px;background:#F2F2F2"></div>
<div style="position:absolute;left:878px;top:681px;width:97px;height:32px;background:#F2F2F2"></div>
<div style="position:absolute;left:975px;top:681px;width:98px;height:32px;background:#F2F2F2"></div>
<div style="position:absolute;left:1073px;top:681px;width:98px;height:32px;background:#F2F2F2"></div>
<div style="position:absolute;left:28px;top:714px;width:308px;height:32px;background:#FFFFFF"></div>
<div style="position:absolute;left:336px;top:714px;width:248px;height:32px;background:#FFFFFF"></div>
<div style="position:absolute;left:584px;top:714px;width:98px;height:32px;background:#FFFFFF"></div>
<div style="position:absolute;left:682px;top:714px;width:98px;height:32px;background:#FFFFFF"></div>
<div style="position:absolute;left:780px;top:714px;width:98px;height:32px;background:#FFFFFF"></div>
<div style="position:absolute;left:878px;top:714px;width:97px;height:32px;background:#FFFFFF"></div>
<div style="position:absolute;left:975px;top:714px;width:98px;height:32px;background:#FFFFFF"></div>
<div style="position:absolute;left:1073px;top:714px;width:98px;height:32px;background:#FFFFFF"></div>
<div style="position:absolute;left:28px;top:747px;width:308px;height:52px;background:#FFFFFF"></div>
<div style="position:absolute;left:336px;top:747px;width:248px;height:52px;background:#FFFFFF"></div>
<div style="position:absolute;left:584px;top:747px;width:98px;height:52px;background:#FFFFFF"></div>
<div style="position:absolute;left:682px;top:747px;width:98px;height:52px;background:#FFFFFF"></div>
<div style="position:absolute;left:780px;top:747px;width:98px;height:52px;background:#FFFFFF"></div>
<div style="position:absolute;left:878px;top:747px;width:97px;height:52px;background:#FFFFFF"></div>
<div style="position:absolute;left:975px;top:747px;width:98px;height:52px;background:#FFFFFF"></div>
<div style="position:absolute;left:1073px;top:747px;width:98px;height:52px;background:#FFFFFF"></div>
<div style="position:absolute;left:28px;top:800px;width:308px;height:32px;background:#F2F2F2"></div>
<div style="position:absolute;left:336px;top:800px;width:248px;height:32px;background:#F2F2F2"></div>
<div style="position:absolute;left:584px;top:800px;width:98px;height:32px;background:#F2F2F2"></div>
<div style="position:absolute;left:682px;top:800px;width:98px;height:32px;background:#F2F2F2"></div>
<div style="position:absolute;left:780px;top:800px;width:98px;height:32px;background:#F2F2F2"></div>
<div style="position:absolute;left:878px;top:800px;width:97px;height:32px;background:#F2F2F2"></div>
<div style="position:absolute;left:975px;top:800px;width:98px;height:32px;background:#F2F2F2"></div>
<div style="position:absolute;left:1073px;top:800px;width:98px;height:32px;background:#F2F2F2"></div>
<div style="position:absolute;left:28px;top:833px;width:308px;height:32px;background:#F2F2F2"></div>
<div style="position:absolute;left:336px;top:833px;width:248px;height:32px;background:#F2F2F2"></div>
<div style="position:absolute;left:584px;top:833px;width:98px;height:32px;background:#F2F2F2"></div>
<div style="position:absolute;left:682px;top:833px;width:98px;height:32px;background:#F2F2F2"></div>
<div style="position:absolute;left:780px;top:833px;width:98px;height:32px;background:#F2F2F2"></div>
<div style="position:absolute;left:878px;top:833px;width:97px;height:32px;background:#F2F2F2"></div>
<div style="position:absolute;left:975px;top:833px;width:98px;height:32px;background:#F2F2F2"></div>
<div style="position:absolute;left:1073px;top:833px;width:98px;height:32px;background:#F2F2F2"></div>
<div style="position:absolute;left:28px;top:866px;width:308px;height:52px;background:#FFFFFF"></div>
<div style="position:absolute;left:336px;top:866px;width:248px;height:52px;background:#FFFFFF"></div>
<div style="position:absolute;left:584px;top:866px;width:98px;height:52px;background:#FFFFFF"></div>
<div style="position:absolute;left:682px;top:866px;width:98px;height:52px;background:#FFFFFF"></div>
<div style="position:absolute;left:780px;top:866px;width:98px;height:52px;background:#FFFFFF"></div>
<div style="position:absolute;left:878px;top:866px;width:97px;height:52px;background:#FFFFFF"></div>
<div style="position:absolute;left:975px;top:866px;width:98px;height:52px;background:#FFFFFF"></div>
<div style="position:absolute;left:1073px;top:866px;width:98px;height:52px;background:#FFFFFF"></div>
<div style="position:absolute;left:28px;top:919px;width:308px;height:32px;background:#FFFFFF"></div>
<div style="position:absolute;left:336px;top:919px;width:248px;height:32px;background:#FFFFFF"></div>
<div style="position:absolute;left:584px;top:919px;width:98px;height:32px;background:#FFFFFF"></div>
<div style="position:absolute;left:682px;top:919px;width:98px;height:32px;background:#FFFFFF"></div>
<div style="position:absolute;left:780px;top:919px;width:98px;height:32px;background:#FFFFFF"></div>
<div style="position:absolute;left:878px;top:919px;width:97px;height:32px;background:#FFFFFF"></div>
<div style="position:absolute;left:975px;top:919px;width:98px;height:32px;background:#FFFFFF"></div>
<div style="position:absolute;left:1073px;top:919px;width:98px;height:32px;background:#FFFFFF"></div>
<div style="position:absolute;left:335px;top:245px;width:1px;height:32px;background:#EEEEEE"></div>
<div style="position:absolute;left:583px;top:245px;width:1px;height:32px;background:#DADADA"></div>
<div style="position:absolute;left:779px;top:245px;width:1px;height:32px;background:#DADADA"></div>
<div style="position:absolute;left:974px;top:245px;width:1px;height:32px;background:#DADADA"></div>
<div style="position:absolute;left:335px;top:278px;width:1px;height:32px;background:#DADADA"></div>
<div style="position:absolute;left:335px;top:311px;width:1px;height:32px;background:#DADADA"></div>
<div style="position:absolute;left:583px;top:311px;width:1px;height:32px;background:#DADADA"></div>
<div style="position:absolute;left:681px;top:311px;width:1px;height:32px;background:#DADADA"></div>
<div style="position:absolute;left:779px;top:311px;width:1px;height:32px;background:#DADADA"></div>
<div style="position:absolute;left:877px;top:311px;width:1px;height:32px;background:#DADADA"></div>
<div style="position:absolute;left:974px;top:311px;width:1px;height:32px;background:#DADADA"></div>
<div style="position:absolute;left:1072px;top:311px;width:1px;height:32px;background:#DADADA"></div>
<div style="position:absolute;left:335px;top:344px;width:1px;height:32px;background:#DADADA"></div>
<div style="position:absolute;left:779px;top:344px;width:1px;height:32px;background:#B8D8BE"></div>
<div style="position:absolute;left:335px;top:377px;width:1px;height:32px;background:#DADADA"></div>
<div style="position:absolute;left:583px;top:377px;width:1px;height:32px;background:#DADADA"></div>
<div style="position:absolute;left:681px;top:377px;width:1px;height:32px;background:#DADADA"></div>
<div style="position:absolute;left:779px;top:377px;width:1px;height:32px;background:#DADADA"></div>
<div style="position:absolute;left:877px;top:377px;width:1px;height:32px;background:#DADADA"></div>
<div style="position:absolute;left:974px;top:377px;width:1px;height:32px;background:#DADADA"></div>
<div style="position:absolute;left:1072px;top:377px;width:1px;height:32px;background:#DADADA"></div>
<div style="position:absolute;left:583px;top:443px;width:1px;height:32px;background:#DADADA"></div>
<div style="position:absolute;left:335px;top:476px;width:1px;height:32px;background:#DADADA"></div>
<div style="position:absolute;left:335px;top:509px;width:1px;height:52px;background:#EEEEEE"></div>
<div style="position:absolute;left:681px;top:509px;width:1px;height:52px;background:#EEEEEE"></div>
<div style="position:absolute;left:779px;top:509px;width:1px;height:52px;background:#EEEEEE"></div>
<div style="position:absolute;left:877px;top:509px;width:1px;height:52px;background:#EEEEEE"></div>
<div style="position:absolute;left:974px;top:509px;width:1px;height:52px;background:#EEEEEE"></div>
<div style="position:absolute;left:1072px;top:509px;width:1px;height:52px;background:#EEEEEE"></div>
<div style="position:absolute;left:335px;top:562px;width:1px;height:32px;background:#EEEEEE"></div>
<div style="position:absolute;left:681px;top:562px;width:1px;height:32px;background:#EEEEEE"></div>
<div style="position:absolute;left:779px;top:562px;width:1px;height:32px;background:#EEEEEE"></div>
<div style="position:absolute;left:877px;top:562px;width:1px;height:32px;background:#EEEEEE"></div>
<div style="position:absolute;left:974px;top:562px;width:1px;height:32px;background:#EEEEEE"></div>
<div style="position:absolute;left:1072px;top:562px;width:1px;height:32px;background:#EEEEEE"></div>
<div style="position:absolute;left:335px;top:595px;width:1px;height:52px;background:#EEEEEE"></div>
<div style="position:absolute;left:681px;top:595px;width:1px;height:52px;background:#EEEEEE"></div>
<div style="position:absolute;left:779px;top:595px;width:1px;height:52px;background:#EEEEEE"></div>
<div style="position:absolute;left:877px;top:595px;width:1px;height:52px;background:#EEEEEE"></div>
<div style="position:absolute;left:974px;top:595px;width:1px;height:52px;background:#EEEEEE"></div>
<div style="position:absolute;left:1072px;top:595px;width:1px;height:52px;background:#EEEEEE"></div>
<div style="position:absolute;left:335px;top:681px;width:1px;height:32px;background:#DADADA"></div>
<div style="position:absolute;left:335px;top:714px;width:1px;height:32px;background:#EEEEEE"></div>
<div style="position:absolute;left:583px;top:714px;width:1px;height:32px;background:#EEEEEE"></div>
<div style="position:absolute;left:681px;top:714px;width:1px;height:32px;background:#EEEEEE"></div>
<div style="position:absolute;left:779px;top:714px;width:1px;height:32px;background:#EEEEEE"></div>
<div style="position:absolute;left:877px;top:714px;width:1px;height:32px;background:#EEEEEE"></div>
<div style="position:absolute;left:974px;top:714px;width:1px;height:32px;background:#EEEEEE"></div>
<div style="position:absolute;left:1072px;top:714px;width:1px;height:32px;background:#EEEEEE"></div>
<div style="position:absolute;left:335px;top:747px;width:1px;height:52px;background:#EEEEEE"></div>
<div style="position:absolute;left:583px;top:747px;width:1px;height:52px;background:#EEEEEE"></div>
<div style="position:absolute;left:681px;top:747px;width:1px;height:52px;background:#EEEEEE"></div>
<div style="position:absolute;left:779px;top:747px;width:1px;height:52px;background:#EEEEEE"></div>
<div style="position:absolute;left:877px;top:747px;width:1px;height:52px;background:#EEEEEE"></div>
<div style="position:absolute;left:974px;top:747px;width:1px;height:52px;background:#EEEEEE"></div>
<div style="position:absolute;left:1072px;top:747px;width:1px;height:52px;background:#EEEEEE"></div>
<div style="position:absolute;left:335px;top:833px;width:1px;height:32px;background:#DADADA"></div>
<div style="position:absolute;left:583px;top:833px;width:1px;height:32px;background:#DADADA"></div>
<div style="position:absolute;left:335px;top:866px;width:1px;height:52px;background:#EEEEEE"></div>
<div style="position:absolute;left:681px;top:866px;width:1px;height:52px;background:#EEEEEE"></div>
<div style="position:absolute;left:779px;top:866px;width:1px;height:52px;background:#EEEEEE"></div>
<div style="position:absolute;left:877px;top:866px;width:1px;height:52px;background:#EEEEEE"></div>
<div style="position:absolute;left:974px;top:866px;width:1px;height:52px;background:#EEEEEE"></div>
<div style="position:absolute;left:1072px;top:866px;width:1px;height:52px;background:#EEEEEE"></div>
<div style="position:absolute;left:335px;top:919px;width:1px;height:32px;background:#EEEEEE"></div>
<div style="position:absolute;left:681px;top:919px;width:1px;height:32px;background:#EEEEEE"></div>
<div style="position:absolute;left:779px;top:919px;width:1px;height:32px;background:#EEEEEE"></div>
<div style="position:absolute;left:877px;top:919px;width:1px;height:32px;background:#EEEEEE"></div>
<div style="position:absolute;left:974px;top:919px;width:1px;height:32px;background:#EEEEEE"></div>
<div style="position:absolute;left:1072px;top:919px;width:1px;height:32px;background:#EEEEEE"></div>
<div style="position:absolute;left:28px;top:277px;width:1136px;height:1px;background:#0A5570"></div>
<div style="position:absolute;left:28px;top:310px;width:1136px;height:1px;background:#0A5570"></div>
<div style="position:absolute;left:28px;top:343px;width:1136px;height:1px;background:#0A5570"></div>
<div style="position:absolute;left:28px;top:376px;width:1136px;height:1px;background:#0A5570"></div>
<div style="position:absolute;left:28px;top:409px;width:1136px;height:1px;background:#0A5570"></div>
<div style="position:absolute;left:28px;top:442px;width:1136px;height:1px;background:#0A5570"></div>
<div style="position:absolute;left:28px;top:475px;width:1136px;height:1px;background:#0A5570"></div>
<div style="position:absolute;left:28px;top:508px;width:1136px;height:1px;background:#0A5570"></div>
<div style="position:absolute;left:28px;top:561px;width:1136px;height:1px;background:#EDEDED"></div>
<div style="position:absolute;left:28px;top:594px;width:1136px;height:1px;background:#EDEDED"></div>
<div style="position:absolute;left:28px;top:647px;width:1136px;height:1px;background:#0A5570"></div>
<div style="position:absolute;left:28px;top:680px;width:1136px;height:1px;background:#0A5570"></div>
<div style="position:absolute;left:28px;top:713px;width:1136px;height:1px;background:#0A5570"></div>
<div style="position:absolute;left:28px;top:746px;width:1136px;height:1px;background:#EDEDED"></div>
<div style="position:absolute;left:28px;top:799px;width:1136px;height:1px;background:#0A5570"></div>
<div style="position:absolute;left:28px;top:832px;width:1136px;height:1px;background:#0A5570"></div>
<div style="position:absolute;left:28px;top:865px;width:555px;height:1px;background:#EDEDED"></div>
<div style="position:absolute;left:583px;top:865px;width:581px;height:1px;background:#0A5570"></div>
<div style="position:absolute;left:28px;top:918px;width:1136px;height:1px;background:#EDEDED"></div>
<div style="position:absolute;left:28px;top:951px;width:1136px;height:1px;background:#EDEDED"></div>
<div style="position:absolute;left:584px;top:252.61px;width:195px;text-align:center;white-space:nowrap;font-size:17px;line-height:17px;font-weight:bold;color:#0A5068;;transform:scaleX(0.93)">JANUARY</div>
<div style="position:absolute;left:780px;top:252.61px;width:194px;text-align:center;white-space:nowrap;font-size:17px;line-height:17px;font-weight:bold;color:#0A5068;;transform:scaleX(0.93)">FEBRUARY</div>
<div style="position:absolute;left:975px;top:252.61px;width:195px;text-align:center;white-space:nowrap;font-size:17px;line-height:17px;font-weight:bold;color:#0A5068;;transform:scaleX(0.93)">MARCH</div>
<div style="position:absolute;left:604px;top:288.15px;white-space:nowrap;font-size:14px;line-height:14px;font-weight:bold;color:#0A5068;">Planned</div>
<div style="position:absolute;left:702px;top:288.15px;white-space:nowrap;font-size:14px;line-height:14px;font-weight:bold;color:#0A5068;">Actual</div>
<div style="position:absolute;left:800px;top:288.15px;white-space:nowrap;font-size:14px;line-height:14px;font-weight:bold;color:#0A5068;">Planned</div>
<div style="position:absolute;left:898px;top:288.15px;white-space:nowrap;font-size:14px;line-height:14px;font-weight:bold;color:#0A5068;">Actual</div>
<div style="position:absolute;left:995px;top:288.15px;white-space:nowrap;font-size:14px;line-height:14px;font-weight:bold;color:#0A5068;">Planned</div>
<div style="position:absolute;left:1093px;top:288.15px;white-space:nowrap;font-size:14px;line-height:14px;font-weight:bold;color:#0A5068;">Actual</div>
<div style="position:absolute;left:37px;top:320.03px;white-space:nowrap;font-size:16.5px;line-height:16.5px;font-weight:bold;color:#0A5068;">Total Cyber Security Budget</div>
<div style="position:absolute;left:350px;top:321.15px;white-space:nowrap;font-size:14px;line-height:14px;font-weight:bold;color:#0A5068;">$350,000</div>
<div style="position:absolute;left:604px;top:321.15px;white-space:nowrap;font-size:14px;line-height:14px;font-weight:normal;color:#0A5068;">$19,810</div>
<div style="position:absolute;left:702px;top:321.15px;white-space:nowrap;font-size:14px;line-height:14px;font-weight:normal;color:#0A5068;">$18,430</div>
<div style="position:absolute;left:800px;top:321.15px;white-space:nowrap;font-size:14px;line-height:14px;font-weight:normal;color:#0A5068;">$21,260</div>
<div style="position:absolute;left:898px;top:321.15px;white-space:nowrap;font-size:14px;line-height:14px;font-weight:normal;color:#0A5068;">$18,430</div>
<div style="position:absolute;left:995px;top:321.15px;white-space:nowrap;font-size:14px;line-height:14px;font-weight:normal;color:#0A5068;">$28,430</div>
<div style="position:absolute;left:1093px;top:321.15px;white-space:nowrap;font-size:14px;line-height:14px;font-weight:normal;color:#0A5068;">$38,430</div>
<div style="position:absolute;left:37px;top:353.03px;white-space:nowrap;font-size:16.5px;line-height:16.5px;font-weight:bold;color:#0A5068;">Planned Vs Actual</div>
<div style="position:absolute;left:582px;top:353.15px;width:195px;text-align:center;white-space:nowrap;font-size:14px;line-height:14px;font-weight:bold;color:#006100;;transform:scaleX(1.06)">$1,380</div>
<div style="position:absolute;left:778px;top:353.15px;width:194px;text-align:center;white-space:nowrap;font-size:14px;line-height:14px;font-weight:bold;color:#006100;;transform:scaleX(1.06)">$2,830</div>
<div style="position:absolute;left:975px;top:353.15px;width:195px;text-align:center;white-space:nowrap;font-size:14px;line-height:14px;font-weight:bold;color:#9C0006;;transform:scaleX(1.05)">($10,000)</div>
<div style="position:absolute;left:37px;top:386.03px;white-space:nowrap;font-size:16.5px;line-height:16.5px;font-weight:bold;color:#0A5068;">Percentage of Budget Used</div>
<div style="position:absolute;left:584px;top:387.15px;width:97px;text-align:center;white-space:nowrap;font-size:14px;line-height:14px;font-weight:normal;color:#0A5068;">8%</div>
<div style="position:absolute;left:682px;top:387.15px;width:97px;text-align:center;white-space:nowrap;font-size:14px;line-height:14px;font-weight:normal;color:#0A5068;">5%</div>
<div style="position:absolute;left:780px;top:387.15px;width:97px;text-align:center;white-space:nowrap;font-size:14px;line-height:14px;font-weight:normal;color:#0A5068;">6%</div>
<div style="position:absolute;left:878px;top:387.15px;width:96px;text-align:center;white-space:nowrap;font-size:14px;line-height:14px;font-weight:normal;color:#0A5068;">5%</div>
<div style="position:absolute;left:975px;top:387.15px;width:97px;text-align:center;white-space:nowrap;font-size:14px;line-height:14px;font-weight:normal;color:#0A5068;">8%</div>
<div style="position:absolute;left:1073px;top:387.15px;width:97px;text-align:center;white-space:nowrap;font-size:14px;line-height:14px;font-weight:normal;color:#0A5068;">11%</div>
<div style="position:absolute;left:37px;top:451.61px;white-space:nowrap;font-size:17px;line-height:17px;font-weight:bold;color:#0A5068;;transform:scaleX(0.905);transform-origin:0 0">PRODUCT</div>
<div style="position:absolute;left:603px;top:452.65px;white-space:nowrap;font-size:14px;line-height:14px;font-weight:bold;color:#0A5068;">$</div>
<div style="position:absolute;left:374px;top:452.65px;width:300px;text-align:right;white-space:nowrap;font-size:14px;line-height:14px;font-weight:bold;color:#0A5068;">5,420</div>
<div style="position:absolute;left:701px;top:452.65px;white-space:nowrap;font-size:14px;line-height:14px;font-weight:bold;color:#0A5068;">$</div>
<div style="position:absolute;left:472px;top:452.65px;width:300px;text-align:right;white-space:nowrap;font-size:14px;line-height:14px;font-weight:bold;color:#0A5068;">4,040</div>
<div style="position:absolute;left:799px;top:452.65px;white-space:nowrap;font-size:14px;line-height:14px;font-weight:bold;color:#0A5068;">$</div>
<div style="position:absolute;left:570px;top:452.65px;width:300px;text-align:right;white-space:nowrap;font-size:14px;line-height:14px;font-weight:bold;color:#0A5068;">4,670</div>
<div style="position:absolute;left:897px;top:452.65px;white-space:nowrap;font-size:14px;line-height:14px;font-weight:bold;color:#0A5068;">$</div>
<div style="position:absolute;left:667px;top:452.65px;width:300px;text-align:right;white-space:nowrap;font-size:14px;line-height:14px;font-weight:bold;color:#0A5068;">4,040</div>
<div style="position:absolute;left:994px;top:452.65px;white-space:nowrap;font-size:14px;line-height:14px;font-weight:bold;color:#0A5068;">$</div>
<div style="position:absolute;left:765px;top:452.65px;width:300px;text-align:right;white-space:nowrap;font-size:14px;line-height:14px;font-weight:bold;color:#0A5068;">14,040</div>
<div style="position:absolute;left:1092px;top:452.65px;white-space:nowrap;font-size:14px;line-height:14px;font-weight:bold;color:#0A5068;">$</div>
<div style="position:absolute;left:863px;top:452.65px;width:300px;text-align:right;white-space:nowrap;font-size:14px;line-height:14px;font-weight:bold;color:#0A5068;">14,040</div>
<div style="position:absolute;left:37px;top:484.61px;white-space:nowrap;font-size:17px;line-height:17px;font-weight:bold;color:#0A5068;;transform:scaleX(0.905);transform-origin:0 0">CATEGORY</div>
<div style="position:absolute;left:344.5px;top:484.61px;white-space:nowrap;font-size:17px;line-height:17px;font-weight:bold;color:#0A5068;;transform:scaleX(0.955);transform-origin:0 0">PRODUCT NAME</div>
<div style="position:absolute;left:43.5px;top:528.30px;white-space:nowrap;font-size:15px;line-height:15px;font-weight:normal;color:#0A5068;letter-spacing:0.88px;-webkit-text-stroke:0.45px #0A5068">Advanced Threat Protection</div>
<div style="position:absolute;left:349.5px;top:518.15px;white-space:nowrap;font-size:14px;line-height:14px;font-weight:normal;color:#0A5068;;transform:scaleX(1.062);transform-origin:0 0">NGAV\EDR\Network Traffic</div>
<div style="position:absolute;left:349.5px;top:539.15px;white-space:nowrap;font-size:14px;line-height:14px;font-weight:normal;color:#0A5068;;transform:scaleX(1.05);transform-origin:0 0">Analysis\UEBA\Deception</div>
<div style="position:absolute;left:598px;top:529.15px;white-space:nowrap;font-size:14px;line-height:14px;font-weight:normal;color:#0A5068;">$250</div>
<div style="position:absolute;left:696px;top:529.15px;white-space:nowrap;font-size:14px;line-height:14px;font-weight:normal;color:#0A5068;">$250</div>
<div style="position:absolute;left:794px;top:529.15px;white-space:nowrap;font-size:14px;line-height:14px;font-weight:normal;color:#0A5068;">$880</div>
<div style="position:absolute;left:892px;top:529.15px;white-space:nowrap;font-size:14px;line-height:14px;font-weight:normal;color:#0A5068;">$250</div>
<div style="position:absolute;left:989px;top:529.15px;white-space:nowrap;font-size:14px;line-height:14px;font-weight:normal;color:#0A5068;">$250</div>
<div style="position:absolute;left:1087px;top:529.15px;white-space:nowrap;font-size:14px;line-height:14px;font-weight:normal;color:#0A5068;">$250</div>
<div style="position:absolute;left:43.5px;top:571.30px;white-space:nowrap;font-size:15px;line-height:15px;font-weight:normal;color:#0A5068;letter-spacing:0.88px;-webkit-text-stroke:0.45px #0A5068">Network Protection</div>
<div style="position:absolute;left:349.5px;top:572.15px;white-space:nowrap;font-size:14px;line-height:14px;font-weight:normal;color:#0A5068;;transform:scaleX(1.026);transform-origin:0 0">Firewall\Secure SD WAN</div>
<div style="position:absolute;left:598px;top:572.15px;white-space:nowrap;font-size:14px;line-height:14px;font-weight:normal;color:#0A5068;">$560</div>
<div style="position:absolute;left:696px;top:572.15px;white-space:nowrap;font-size:14px;line-height:14px;font-weight:normal;color:#0A5068;">$560</div>
<div style="position:absolute;left:794px;top:572.15px;white-space:nowrap;font-size:14px;line-height:14px;font-weight:normal;color:#0A5068;">$560</div>
<div style="position:absolute;left:892px;top:572.15px;white-space:nowrap;font-size:14px;line-height:14px;font-weight:normal;color:#0A5068;">$560</div>
<div style="position:absolute;left:989px;top:572.15px;white-space:nowrap;font-size:14px;line-height:14px;font-weight:normal;color:#0A5068;">$560</div>
<div style="position:absolute;left:1087px;top:572.15px;white-space:nowrap;font-size:14px;line-height:14px;font-weight:normal;color:#0A5068;">$560</div>
<div style="position:absolute;left:43.5px;top:614.30px;white-space:nowrap;font-size:15px;line-height:15px;font-weight:normal;color:#0A5068;letter-spacing:0.88px;-webkit-text-stroke:0.45px #0A5068">Email Protection</div>
<div style="position:absolute;left:349.5px;top:615.15px;white-space:nowrap;font-size:14px;line-height:14px;font-weight:normal;color:#0A5068;;transform:scaleX(1.044);transform-origin:0 0">Email Provider\3rd Party Solution</div>
<div style="position:absolute;left:598px;top:615.15px;white-space:nowrap;font-size:14px;line-height:14px;font-weight:normal;color:#0A5068;">$0</div>
<div style="position:absolute;left:696px;top:615.15px;white-space:nowrap;font-size:14px;line-height:14px;font-weight:normal;color:#0A5068;">$0</div>
<div style="position:absolute;left:794px;top:615.15px;white-space:nowrap;font-size:14px;line-height:14px;font-weight:normal;color:#0A5068;">$0</div>
<div style="position:absolute;left:892px;top:615.15px;white-space:nowrap;font-size:14px;line-height:14px;font-weight:normal;color:#0A5068;">$0</div>
<div style="position:absolute;left:989px;top:615.15px;white-space:nowrap;font-size:14px;line-height:14px;font-weight:normal;color:#0A5068;">$10,000</div>
<div style="position:absolute;left:1087px;top:615.15px;white-space:nowrap;font-size:14px;line-height:14px;font-weight:normal;color:#0A5068;">$10,000</div>
<div style="position:absolute;left:36.5px;top:656.61px;white-space:nowrap;font-size:17px;line-height:17px;font-weight:bold;color:#0A5068;;transform:scaleX(0.905);transform-origin:0 0">STAFF</div>
<div style="position:absolute;left:603px;top:658.15px;white-space:nowrap;font-size:14px;line-height:14px;font-weight:bold;color:#0A5068;">$</div>
<div style="position:absolute;left:374px;top:658.15px;width:300px;text-align:right;white-space:nowrap;font-size:14px;line-height:14px;font-weight:bold;color:#0A5068;">10,800</div>
<div style="position:absolute;left:701px;top:658.15px;white-space:nowrap;font-size:14px;line-height:14px;font-weight:bold;color:#0A5068;">$</div>
<div style="position:absolute;left:472px;top:658.15px;width:300px;text-align:right;white-space:nowrap;font-size:14px;line-height:14px;font-weight:bold;color:#0A5068;">10,800</div>
<div style="position:absolute;left:799px;top:658.15px;white-space:nowrap;font-size:14px;line-height:14px;font-weight:bold;color:#0A5068;">$</div>
<div style="position:absolute;left:570px;top:658.15px;width:300px;text-align:right;white-space:nowrap;font-size:14px;line-height:14px;font-weight:bold;color:#0A5068;">13,000</div>
<div style="position:absolute;left:897px;top:658.15px;white-space:nowrap;font-size:14px;line-height:14px;font-weight:bold;color:#0A5068;">$</div>
<div style="position:absolute;left:667px;top:658.15px;width:300px;text-align:right;white-space:nowrap;font-size:14px;line-height:14px;font-weight:bold;color:#0A5068;">10,800</div>
<div style="position:absolute;left:994px;top:658.15px;white-space:nowrap;font-size:14px;line-height:14px;font-weight:bold;color:#0A5068;">$</div>
<div style="position:absolute;left:765px;top:658.15px;width:300px;text-align:right;white-space:nowrap;font-size:14px;line-height:14px;font-weight:bold;color:#0A5068;">10,800</div>
<div style="position:absolute;left:1092px;top:658.15px;white-space:nowrap;font-size:14px;line-height:14px;font-weight:bold;color:#0A5068;">$</div>
<div style="position:absolute;left:863px;top:658.15px;width:300px;text-align:right;white-space:nowrap;font-size:14px;line-height:14px;font-weight:bold;color:#0A5068;">10,800</div>
<div style="position:absolute;left:37px;top:689.61px;white-space:nowrap;font-size:17px;line-height:17px;font-weight:bold;color:#0A5068;;transform:scaleX(0.905);transform-origin:0 0">CATEGORY</div>
<div style="position:absolute;left:344px;top:689.61px;white-space:nowrap;font-size:17px;line-height:17px;font-weight:bold;color:#0A5068;;transform:scaleX(0.88);transform-origin:0 0">SPECIFIC</div>
<div style="position:absolute;left:43.5px;top:723.30px;white-space:nowrap;font-size:15px;line-height:15px;font-weight:normal;color:#0A5068;letter-spacing:0.88px;-webkit-text-stroke:0.45px #0A5068">Security Team Compensation</div>
<div style="position:absolute;left:349.5px;top:724.15px;white-space:nowrap;font-size:14px;line-height:14px;font-weight:normal;color:#0A5068;;transform:scaleX(1.048);transform-origin:0 0">Architect (employee name)</div>
<div style="position:absolute;left:598px;top:724.15px;white-space:nowrap;font-size:14px;line-height:14px;font-weight:normal;color:#0A5068;">$5,000</div>
<div style="position:absolute;left:696px;top:724.15px;white-space:nowrap;font-size:14px;line-height:14px;font-weight:normal;color:#0A5068;">$5,000</div>
<div style="position:absolute;left:794px;top:724.15px;white-space:nowrap;font-size:14px;line-height:14px;font-weight:normal;color:#0A5068;">$5,000</div>
<div style="position:absolute;left:892px;top:724.15px;white-space:nowrap;font-size:14px;line-height:14px;font-weight:normal;color:#0A5068;">$5,000</div>
<div style="position:absolute;left:989px;top:724.15px;white-space:nowrap;font-size:14px;line-height:14px;font-weight:normal;color:#0A5068;">$5,000</div>
<div style="position:absolute;left:1087px;top:724.15px;white-space:nowrap;font-size:14px;line-height:14px;font-weight:normal;color:#0A5068;">$5,000</div>
<div style="position:absolute;left:349.5px;top:756.15px;white-space:nowrap;font-size:14px;line-height:14px;font-weight:normal;color:#0A5068;;transform:scaleX(1.052);transform-origin:0 0">Data Privacy Officer (employee</div>
<div style="position:absolute;left:349.5px;top:777.15px;white-space:nowrap;font-size:14px;line-height:14px;font-weight:normal;color:#0A5068;;transform:scaleX(1.08);transform-origin:0 0">name)</div>
<div style="position:absolute;left:598px;top:767.15px;white-space:nowrap;font-size:14px;line-height:14px;font-weight:normal;color:#0A5068;">$5,800</div>
<div style="position:absolute;left:696px;top:767.15px;white-space:nowrap;font-size:14px;line-height:14px;font-weight:normal;color:#0A5068;">$5,800</div>
<div style="position:absolute;left:794px;top:767.15px;white-space:nowrap;font-size:14px;line-height:14px;font-weight:normal;color:#0A5068;">$8,000</div>
<div style="position:absolute;left:892px;top:767.15px;white-space:nowrap;font-size:14px;line-height:14px;font-weight:normal;color:#0A5068;">$5,800</div>
<div style="position:absolute;left:989px;top:767.15px;white-space:nowrap;font-size:14px;line-height:14px;font-weight:normal;color:#0A5068;">$5,800</div>
<div style="position:absolute;left:1087px;top:767.15px;white-space:nowrap;font-size:14px;line-height:14px;font-weight:normal;color:#0A5068;">$5,800</div>
<div style="position:absolute;left:36.5px;top:808.61px;white-space:nowrap;font-size:17px;line-height:17px;font-weight:bold;color:#0A5068;;transform:scaleX(0.88);transform-origin:0 0">SERVICES</div>
<div style="position:absolute;left:603px;top:810.15px;white-space:nowrap;font-size:14px;line-height:14px;font-weight:bold;color:#0A5068;">$</div>
<div style="position:absolute;left:374px;top:810.15px;width:300px;text-align:right;white-space:nowrap;font-size:14px;line-height:14px;font-weight:bold;color:#0A5068;">3,590</div>
<div style="position:absolute;left:701px;top:810.15px;white-space:nowrap;font-size:14px;line-height:14px;font-weight:bold;color:#0A5068;">$</div>
<div style="position:absolute;left:472px;top:810.15px;width:300px;text-align:right;white-space:nowrap;font-size:14px;line-height:14px;font-weight:bold;color:#0A5068;">3,590</div>
<div style="position:absolute;left:799px;top:810.15px;white-space:nowrap;font-size:14px;line-height:14px;font-weight:bold;color:#0A5068;">$</div>
<div style="position:absolute;left:570px;top:810.15px;width:300px;text-align:right;white-space:nowrap;font-size:14px;line-height:14px;font-weight:bold;color:#0A5068;">3,590</div>
<div style="position:absolute;left:897px;top:810.15px;white-space:nowrap;font-size:14px;line-height:14px;font-weight:bold;color:#0A5068;">$</div>
<div style="position:absolute;left:667px;top:810.15px;width:300px;text-align:right;white-space:nowrap;font-size:14px;line-height:14px;font-weight:bold;color:#0A5068;">3,590</div>
<div style="position:absolute;left:994px;top:810.15px;white-space:nowrap;font-size:14px;line-height:14px;font-weight:bold;color:#0A5068;">$</div>
<div style="position:absolute;left:765px;top:810.15px;width:300px;text-align:right;white-space:nowrap;font-size:14px;line-height:14px;font-weight:bold;color:#0A5068;">3,590</div>
<div style="position:absolute;left:1092px;top:810.15px;white-space:nowrap;font-size:14px;line-height:14px;font-weight:bold;color:#0A5068;">$</div>
<div style="position:absolute;left:863px;top:810.15px;width:300px;text-align:right;white-space:nowrap;font-size:14px;line-height:14px;font-weight:bold;color:#0A5068;">13,590</div>
<div style="position:absolute;left:37px;top:841.61px;white-space:nowrap;font-size:17px;line-height:17px;font-weight:bold;color:#0A5068;;transform:scaleX(0.905);transform-origin:0 0">CATEGORY</div>
<div style="position:absolute;left:344.5px;top:841.61px;white-space:nowrap;font-size:17px;line-height:17px;font-weight:bold;color:#0A5068;;transform:scaleX(0.935);transform-origin:0 0">SERVICE NAME</div>
<div style="position:absolute;left:43.5px;top:874.30px;white-space:nowrap;font-size:15px;line-height:15px;font-weight:normal;color:#0A5068;letter-spacing:0.88px;-webkit-text-stroke:0.45px #0A5068">Security Products :</div>
<div style="position:absolute;left:43.5px;top:895.30px;white-space:nowrap;font-size:15px;line-height:15px;font-weight:normal;color:#0A5068;letter-spacing:0.88px;-webkit-text-stroke:0.45px #0A5068">Deployment\Maintenance\Services</div>
<div style="position:absolute;left:349.5px;top:886.15px;white-space:nowrap;font-size:14px;line-height:14px;font-weight:normal;color:#0A5068;;transform:scaleX(1.036);transform-origin:0 0">Service provider name</div>
<div style="position:absolute;left:598px;top:886.15px;white-space:nowrap;font-size:14px;line-height:14px;font-weight:normal;color:#0A5068;">$900</div>
<div style="position:absolute;left:696px;top:886.15px;white-space:nowrap;font-size:14px;line-height:14px;font-weight:normal;color:#0A5068;">$900</div>
<div style="position:absolute;left:794px;top:886.15px;white-space:nowrap;font-size:14px;line-height:14px;font-weight:normal;color:#0A5068;">$900</div>
<div style="position:absolute;left:892px;top:886.15px;white-space:nowrap;font-size:14px;line-height:14px;font-weight:normal;color:#0A5068;">$900</div>
<div style="position:absolute;left:989px;top:886.15px;white-space:nowrap;font-size:14px;line-height:14px;font-weight:normal;color:#0A5068;">$900</div>
<div style="position:absolute;left:1087px;top:886.15px;white-space:nowrap;font-size:14px;line-height:14px;font-weight:normal;color:#0A5068;">$900</div>
<div style="position:absolute;left:43.5px;top:928.30px;white-space:nowrap;font-size:15px;line-height:15px;font-weight:normal;color:#0A5068;letter-spacing:0.88px;-webkit-text-stroke:0.45px #0A5068">Consulting</div>
<div style="position:absolute;left:349.5px;top:929.15px;white-space:nowrap;font-size:14px;line-height:14px;font-weight:normal;color:#0A5068;;transform:scaleX(1.036);transform-origin:0 0">Service provider name</div>
<div style="position:absolute;left:598px;top:929.15px;white-space:nowrap;font-size:14px;line-height:14px;font-weight:normal;color:#0A5068;">$350</div>
<div style="position:absolute;left:696px;top:929.15px;white-space:nowrap;font-size:14px;line-height:14px;font-weight:normal;color:#0A5068;">$350</div>
<div style="position:absolute;left:794px;top:929.15px;white-space:nowrap;font-size:14px;line-height:14px;font-weight:normal;color:#0A5068;">$350</div>
<div style="position:absolute;left:892px;top:929.15px;white-space:nowrap;font-size:14px;line-height:14px;font-weight:normal;color:#0A5068;">$350</div>
<div style="position:absolute;left:989px;top:929.15px;white-space:nowrap;font-size:14px;line-height:14px;font-weight:normal;color:#0A5068;">$350</div>
<div style="position:absolute;left:1087px;top:929.15px;white-space:nowrap;font-size:14px;line-height:14px;font-weight:normal;color:#0A5068;">$350</div>
</body></html>
